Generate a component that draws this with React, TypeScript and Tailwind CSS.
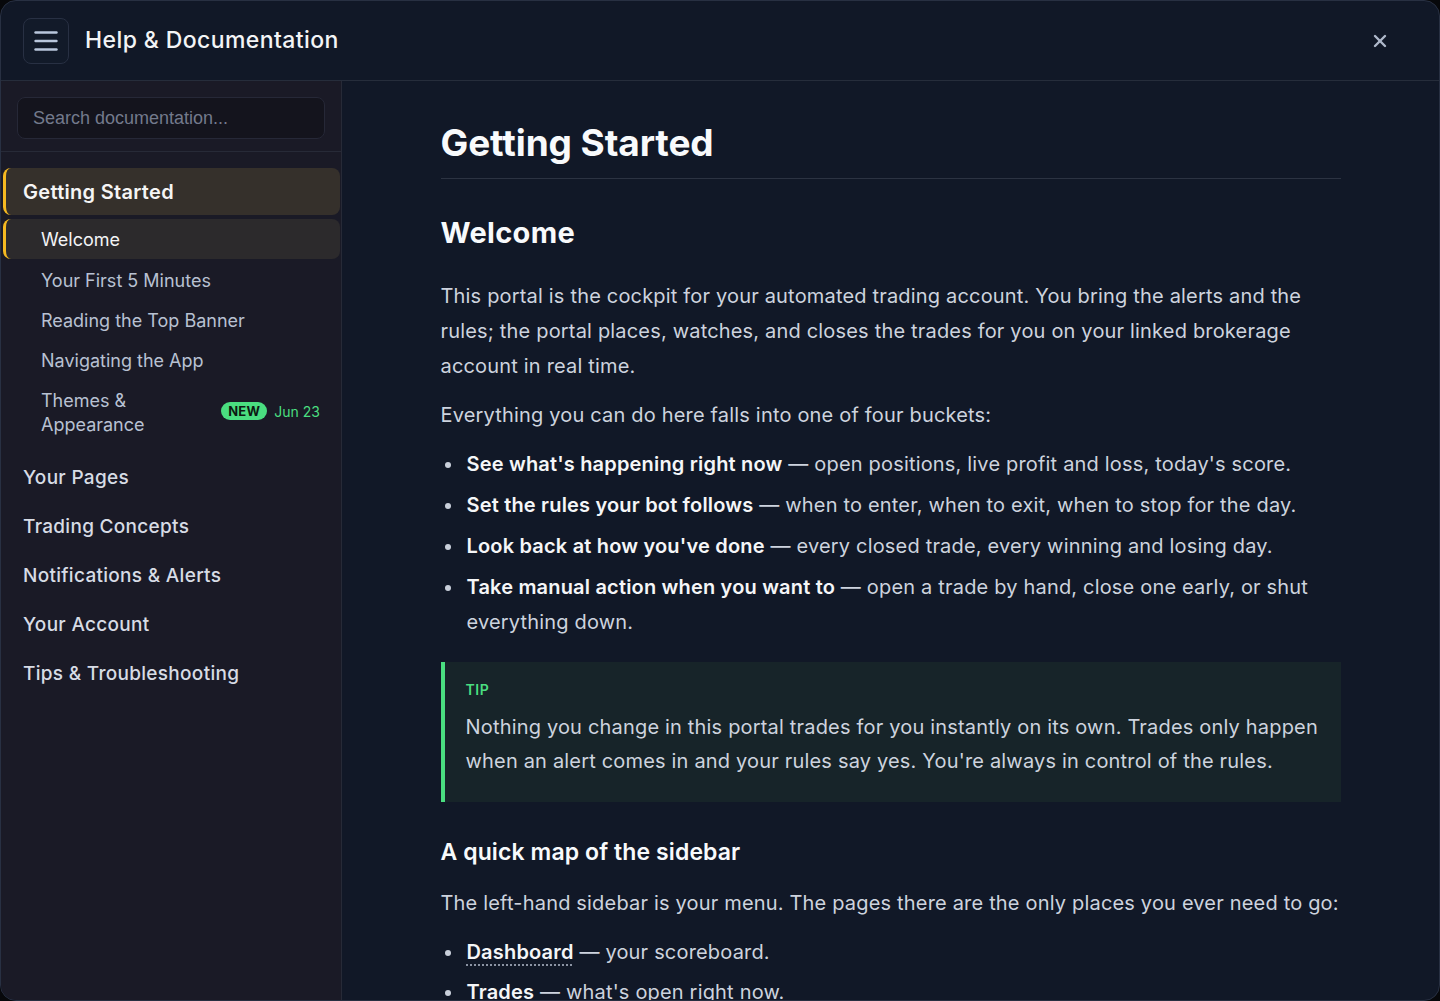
import React from "react";

const subItems = ["Your First 5 Minutes", "Reading the Top Banner", "Navigating the App"];
const sections = ["Your Pages", "Trading Concepts", "Notifications & Alerts", "Your Account", "Tips & Troubleshooting"];

const buckets = [
  { title: "See what's happening right now", text: "open positions, live profit and loss, today's score." },
  { title: "Set the rules your bot follows", text: "when to enter, when to exit, when to stop for the day." },
  { title: "Look back at how you've done", text: "every closed trade, every winning and losing day." },
  { title: "Take manual action when you want to", text: "open a trade by hand, close one early, or shut everything down." },
];

const Bullet = ({ children }: { children: React.ReactNode }) => (
  <li className="relative pl-[26px] leading-[35px] before:absolute before:left-[4px] before:top-[15px] before:h-[6px] before:w-[6px] before:rounded-full before:bg-[#c9cfda] before:content-['']">
    {children}
  </li>
);

export default function App() {
  return (
    <div className="h-[1001px] w-[1440px] overflow-hidden bg-[#07080b] font-['Inter',sans-serif]">
      <div className="flex h-full flex-col overflow-hidden rounded-2xl border border-[#283042] bg-[#111827]">
        {/* Header */}
        <header className="flex h-[80px] shrink-0 items-center justify-between border-b border-[#262d3b] pl-[22px] pr-[52px]">
          <div className="flex items-center gap-4">
            <button className="flex h-[46px] w-[46px] items-center justify-center rounded-lg border border-[#283043] bg-[#121a29]">
              <svg width="24" height="20" viewBox="0 0 24 20" fill="none" stroke="#b9c6dc" strokeWidth="2.4" strokeLinecap="round">
                <line x1="1.5" y1="1.5" x2="22.5" y2="1.5" />
                <line x1="1.5" y1="10" x2="22.5" y2="10" />
                <line x1="1.5" y1="18.5" x2="22.5" y2="18.5" />
              </svg>
            </button>
            <h1 className="text-[23px] font-medium tracking-[0.4px] text-[#f3f4f6]">Help &amp; Documentation</h1>
          </div>
          <svg width="14" height="14" viewBox="0 0 14 14" fill="none" stroke="#aeb8ca" strokeWidth="2.4" strokeLinecap="round">
            <line x1="2" y1="2" x2="12" y2="12" />
            <line x1="12" y1="2" x2="2" y2="12" />
          </svg>
        </header>

        <div className="flex min-h-0 flex-1">
          {/* Sidebar */}
          <aside className="w-[341px] shrink-0 border-r border-[#272a37] bg-[#1a1a26]">
            <div className="border-b border-[#272a37] px-4 pb-3 pt-4">
              <div className="flex h-[42px] items-center rounded-lg border border-[#262837] bg-[#14141d] px-[15px]">
                <span className="font-['Liberation_Sans',sans-serif] text-[18px] text-[#737a8c]">Search documentation...</span>
              </div>
            </div>

            <nav className="pl-[2px] pr-[1px] pt-4">
              <div className="flex h-[47px] items-center rounded-lg border-l-[3px] border-[#f5b921] bg-[#35302b] pl-[17px] pt-[1px] text-[20px] font-semibold tracking-[0.3px] text-[#f5f5f5]">
                Getting Started
              </div>
              <div className="mt-1 flex h-[40px] items-center rounded-lg border-l-[3px] border-[#f5b921] bg-[#2c2a2c] pl-[35px] pt-[1px] text-[18px] text-[#f3f4f6]">
                Welcome
              </div>
              {subItems.map((s) => (
                <div key={s} className="flex h-[40px] items-center pl-[38px] pt-[2px] text-[18px] text-[#b8c1d2]">
                  {s}
                </div>
              ))}
              <div className="flex h-[64px] items-center justify-between pl-[38px] pr-[20px]">
                <span className="pt-[3px] text-[18px] leading-[24px] text-[#b8c1d2]">
                  Themes &amp;
                  <br />
                  Appearance
                </span>
                <div className="flex items-center gap-[7px]">
                  <span className="rounded-full bg-[#4ade80] px-[7px] text-[13px] font-bold leading-[18px] tracking-[0.3px] text-[#0d1a12]">NEW</span>
                  <span className="text-[14px] text-[#4ade80]">Jun 23</span>
                </div>
              </div>
              <div className="mt-[11px]">
                {sections.map((s) => (
                  <div key={s} className="flex h-[49px] items-center pl-[20px] text-[19px] font-medium tracking-[0.3px] text-[#d7dce5]">
                    {s}
                  </div>
                ))}
              </div>
            </nav>
          </aside>

          {/* Main */}
          <main className="min-w-0 flex-1 overflow-hidden">
            <article className="mx-auto w-[900px] pt-[37px] text-[20px] tracking-[0.18px] text-[#cdd3de]">
              <h1 className="border-b border-[#2c3342] pb-[10px] text-[37px] font-bold leading-[50px] tracking-[-0.1px] text-[#f8fafc]">
                Getting Started
              </h1>
              <h2 className="mt-[32px] text-[29px] font-bold leading-[44px] tracking-[0.3px] text-[#f8fafc]">Welcome</h2>
              <p className="mt-[24px] leading-[35px]">
                This portal is the cockpit for your automated trading account. You bring the alerts and the rules; the
                portal places, watches, and closes the trades for you on your linked brokerage account in real time.
              </p>
              <p className="mt-[14px] leading-[35px]">Everything you can do here falls into one of four buckets:</p>
              <ul className="mt-[14px] flex flex-col gap-[6px]">
                {buckets.map((b) => (
                  <Bullet key={b.title}>
                    <strong className="font-semibold text-[#f5f6f8]">{b.title}</strong> — {b.text}
                  </Bullet>
                ))}
              </ul>
              <div className="mt-[22px] border-l-4 border-[#4ade80] bg-[#172429] pb-[24px] pl-[21px] pr-[20px] pt-[18px]">
                <div className="text-[14px] font-semibold leading-[20px] tracking-[0.6px] text-[#4ade80]">TIP</div>
                <p className="mt-[10px] leading-[34px] text-[#cdd3de]">
                  Nothing you change in this portal trades for you instantly on its own. Trades only happen when an
                  alert comes in and your rules say yes. You're always in control of the rules.
                </p>
              </div>
              <h3 className="mt-[34px] text-[23px] font-semibold leading-[32px] tracking-[0.1px] text-[#f8fafc]">A quick map of the sidebar</h3>
              <p className="mt-[18px] leading-[35px]">
                The left-hand sidebar is your menu. The pages there are the only places you ever need to go:
              </p>
              <ul className="mt-[14px] flex flex-col gap-[5px]">
                <Bullet>
                  <strong className="font-semibold text-[#f5f6f8] underline decoration-[#8b93a3] decoration-dotted underline-offset-[5px]">
                    Dashboard
                  </strong>{" "}
                  — your scoreboard.
                </Bullet>
                <Bullet>
                  <strong className="font-semibold text-[#f5f6f8]">Trades</strong> — what's open right now.
                </Bullet>
              </ul>
            </article>
          </main>
        </div>
      </div>
    </div>
  );
}
